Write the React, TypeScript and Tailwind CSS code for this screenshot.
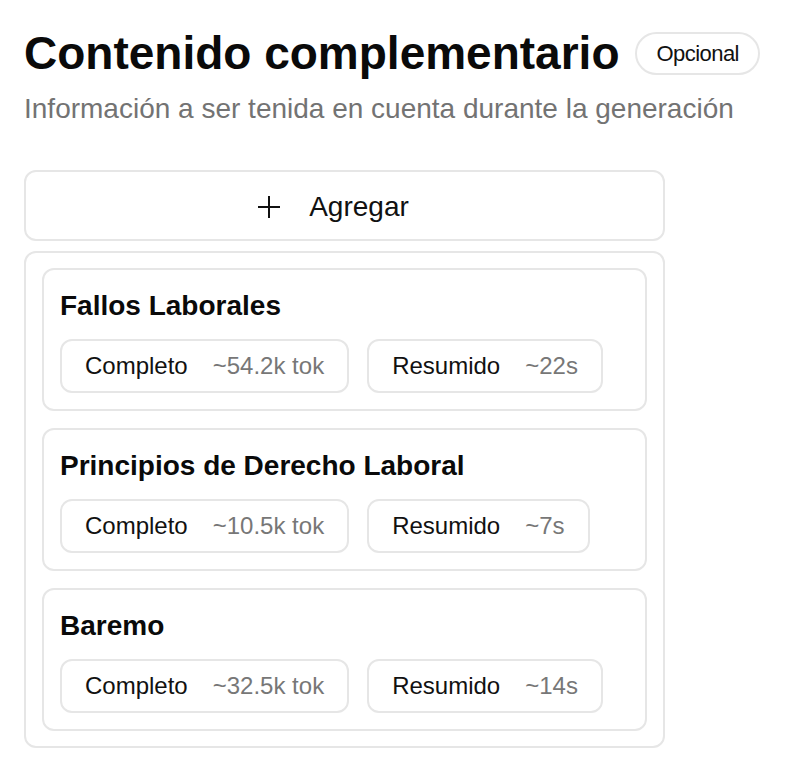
import React from 'react';

type Source = {
  title: string;
  full: string;
  summary: string;
};

const sources: Source[] = [
  { title: 'Fallos Laborales', full: '~54.2k tok', summary: '~22s' },
  { title: 'Principios de Derecho Laboral', full: '~10.5k tok', summary: '~7s' },
  { title: 'Baremo', full: '~32.5k tok', summary: '~14s' },
];

const Chip: React.FC<{ label: string; hint: string }> = ({ label, hint }) => (
  <button className="flex h-[54px] items-center gap-[25px] rounded-[12px] border-2 border-[#e6e6e6] bg-white px-[23px] text-[24px] leading-none">
    <span className="text-[#111]">{label}</span>
    <span className="text-[#777]">{hint}</span>
  </button>
);

const App: React.FC = () => {
  return (
    <div className="min-h-[770px] bg-white px-[24px] pt-[26px] font-['Liberation_Sans',Arial,sans-serif] text-[#0a0a0a]">
      <div className="flex items-center gap-[16px]">
        <h1 className="text-[46px] font-bold leading-[55px]">Contenido complementario</h1>
        <span className="flex h-[43px] items-center rounded-full border-2 border-[#e6e6e6] px-[19px] text-[22px] tracking-tight text-[#111]">
          Opcional
        </span>
      </div>
      <p className="mt-[11px] text-[28px] leading-[34px] text-[#737373]">
        Información a ser tenida en cuenta durante la generación
      </p>

      <div className="mt-[44px] w-[641px]">
        <button className="flex h-[71px] w-full items-center justify-center gap-[29px] rounded-[12px] border-2 border-[#e6e6e6] bg-white pr-[22px] pt-[3px] text-[28px] text-[#111]">
          <svg width="22" height="22" viewBox="0 0 22 22" fill="none" stroke="currentColor" strokeWidth="2">
            <path d="M11 0v22M0 11h22" />
          </svg>
          Agregar
        </button>

        <div className="mt-[10px] flex flex-col gap-[17px] rounded-[12px] border-2 border-[#e6e6e6] px-[16px] py-[15px]">
          {sources.map((s) => (
            <div key={s.title} className="rounded-[12px] border-2 border-[#e6e6e6] px-[16px] pb-[16px] pt-[19px]">
              <h2 className="mb-[16px] text-[28px] font-bold leading-[34px]">{s.title}</h2>
              <div className="flex gap-[18px]">
                <Chip label="Completo" hint={s.full} />
                <Chip label="Resumido" hint={s.summary} />
              </div>
            </div>
          ))}
        </div>
      </div>
    </div>
  );
};

export default App;
